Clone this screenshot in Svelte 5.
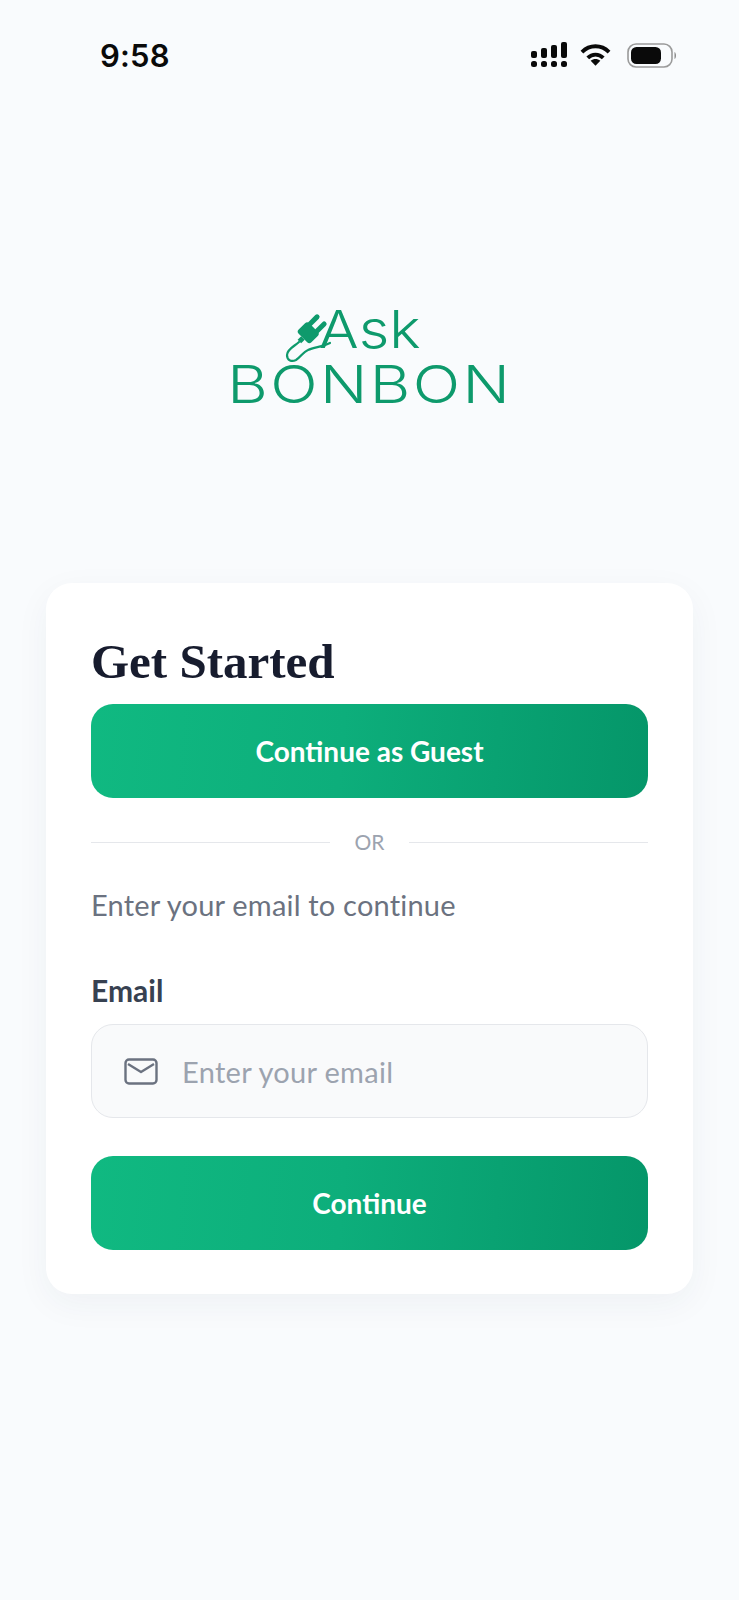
<script>
    let email = $state('');
</script>

<div class="screen">
    <header class="status">
        <span class="time">9:58</span>
        <div class="status-icons">
            <svg class="signal" width="37" height="26" viewBox="0 0 37 26" fill="#0a0a0a">
                <rect x="0" y="9" width="6" height="7" rx="2" />
                <rect x="10" y="6" width="6" height="10" rx="2" />
                <rect x="20" y="3" width="6" height="13" rx="2" />
                <rect x="30" y="0" width="6" height="16" rx="2" />
                <rect x="0" y="19" width="6" height="6" rx="2.5" />
                <rect x="10" y="19" width="6" height="6" rx="2.5" />
                <rect x="20" y="19" width="6" height="6" rx="2.5" />
                <rect x="30" y="19" width="6" height="6" rx="2.5" />
            </svg>
            <svg class="wifi" width="31" height="24" viewBox="0 0 32 24" fill="none" stroke="#0a0a0a" stroke-width="4">
                <path d="M2 9 C10 1 22 1 30 9" />
                <path d="M8 15 C12.500 10.500 19.500 10.500 24 15" />
                <path d="M16 23 L11 18 C14 15.500 18 15.500 21 18 Z" fill="#0a0a0a" stroke="none" />
            </svg>
            <svg class="battery" width="50" height="25" viewBox="0 0 50 25" fill="none">
                <rect x="1" y="1" width="44" height="23" rx="8" stroke="#9a9a9a" stroke-width="1.600" />
                <rect x="4" y="4" width="30" height="17" rx="5.500" fill="#0a0a0a" />
                <path d="M47.500 9 C49.500 10 49.500 15 47.500 16 Z" fill="#8a8a8a" />
            </svg>
        </div>
    </header>

    <div class="logo">
        <span class="ask">Ask</span>
        <span class="bonbon">BONBON</span>
        <svg class="plug" width="60" height="60" viewBox="0 0 60 60" fill="none" stroke="#0e9a6c">
            <g transform="rotate(45 30 18)">
                <rect x="21" y="13" width="18" height="15" rx="3" fill="#0e9a6c" stroke="none" />
                <path d="M25 13 V3 M35 13 V3" stroke-width="5" stroke-linecap="round" />
                <path d="M30 28 V33" stroke-width="5" />
            </g>
            <path d="M19 29 C15 33 7 36 7 42 C7 48 12 49 16 47 C21 44 23 39 28 37 C34 34 42 34 50 30" stroke-width="2.200" stroke-linecap="round" />
        </svg>
    </div>

    <main class="card">
        <h1>Get Started</h1>
        <button class="primary guest">Continue as Guest</button>
        <div class="divider"><span>OR</span></div>
        <p class="hint">Enter your email to continue</p>
        <label for="email">Email</label>
        <div class="field">
            <svg width="34" height="27" viewBox="0 0 34 27" fill="none" stroke="#6b7280" stroke-width="2.400">
                <rect x="1.500" y="1.500" width="31" height="24" rx="3.500" />
                <path d="M4 6 L17 14 L30 6" stroke-linejoin="round" />
            </svg>
            <input id="email" type="email" placeholder="Enter your email" bind:value={email} />
        </div>
        <button class="primary">Continue</button>
    </main>
</div>

<style>
    :global(body) {
        background: #f9fbfd;
    }

    .screen {
        width: 739px;
        height: 1600px;
        overflow: hidden;
        background: #f9fbfd;
        font-family: Lato, sans-serif;
    }

    .status {
        display: flex;
        align-items: center;
        justify-content: space-between;
        height: 40px;
        padding: 35px 62px 0 100px;
    }

    .time {
        font-family: Inter, sans-serif;
        font-size: 31px;
        font-weight: 600;
        letter-spacing: 0.2px;
        color: #0a0a0a;
    }

    .status-icons {
        display: flex;
        align-items: center;
        gap: 12px;
    }

    .wifi {
        margin-right: 4px;
    }

    .logo {
        position: relative;
        display: flex;
        flex-direction: column;
        align-items: center;
        margin-top: 229px;
        height: 109px;
        font-family: Inter, sans-serif;
        font-weight: 300;
        color: #0e9a6c;
    }

    .plug {
        position: absolute;
        left: 280px;
        top: 9px;
    }

    .ask {
        font-size: 52px;
        line-height: 52px;
        transform: scaleX(1.14);
    }

    .bonbon {
        font-size: 52px;
        line-height: 52px;
        letter-spacing: 2px;
        margin-top: 3px;
        transform: scaleX(1.2);
    }

    .card {
        margin: 170px 46px 0;
        padding: 49px 45px 44px;
        background: #fff;
        border-radius: 26px;
        box-shadow: 0 10px 34px rgba(30, 50, 80, 0.05);
    }

    h1 {
        margin: 0 0 12px;
        font-family: "Liberation Serif", serif;
        font-size: 49px;
        line-height: 60px;
        font-weight: 700;
        color: #171c2e;
    }

    .primary {
        display: block;
        width: 100%;
        height: 94px;
        border: 0;
        border-radius: 22px;
        background: linear-gradient(95deg, #10b981 0%, #0dae7b 45%, #059669 100%);
        color: #fff;
        font-family: inherit;
        font-size: 28px;
        font-weight: 700;
    }

    .divider {
        display: flex;
        align-items: center;
        gap: 25px;
        margin-top: 31px;
        color: #9ca3af;
        font-size: 21px;
        line-height: 26px;
    }

    .divider::before,
    .divider::after {
        content: "";
        flex: 1;
        height: 1px;
        background: #e5e7eb;
    }

    .hint {
        margin: 30px 0 0;
        font-size: 29px;
        line-height: 40px;
        letter-spacing: 0.2px;
        color: #6b7280;
    }

    label {
        display: block;
        margin-top: 45px;
        font-size: 30px;
        line-height: 40px;
        font-weight: 700;
        color: #374151;
    }

    .field {
        display: flex;
        align-items: center;
        gap: 22px;
        height: 94px;
        box-sizing: border-box;
        margin-top: 14px;
        padding-left: 32px;
        background: #f9fafb;
        border: 1.500px solid #e5e7eb;
        border-radius: 22px;
    }

    input {
        flex: 1;
        min-width: 0;
        border: 0;
        outline: 0;
        background: transparent;
        font-family: inherit;
        font-size: 29px;
        letter-spacing: 0.3px;
        color: #374151;
    }

    input::placeholder {
        color: #9ca3af;
        opacity: 1;
    }

    .field + .primary {
        margin-top: 38px;
    }
</style>
